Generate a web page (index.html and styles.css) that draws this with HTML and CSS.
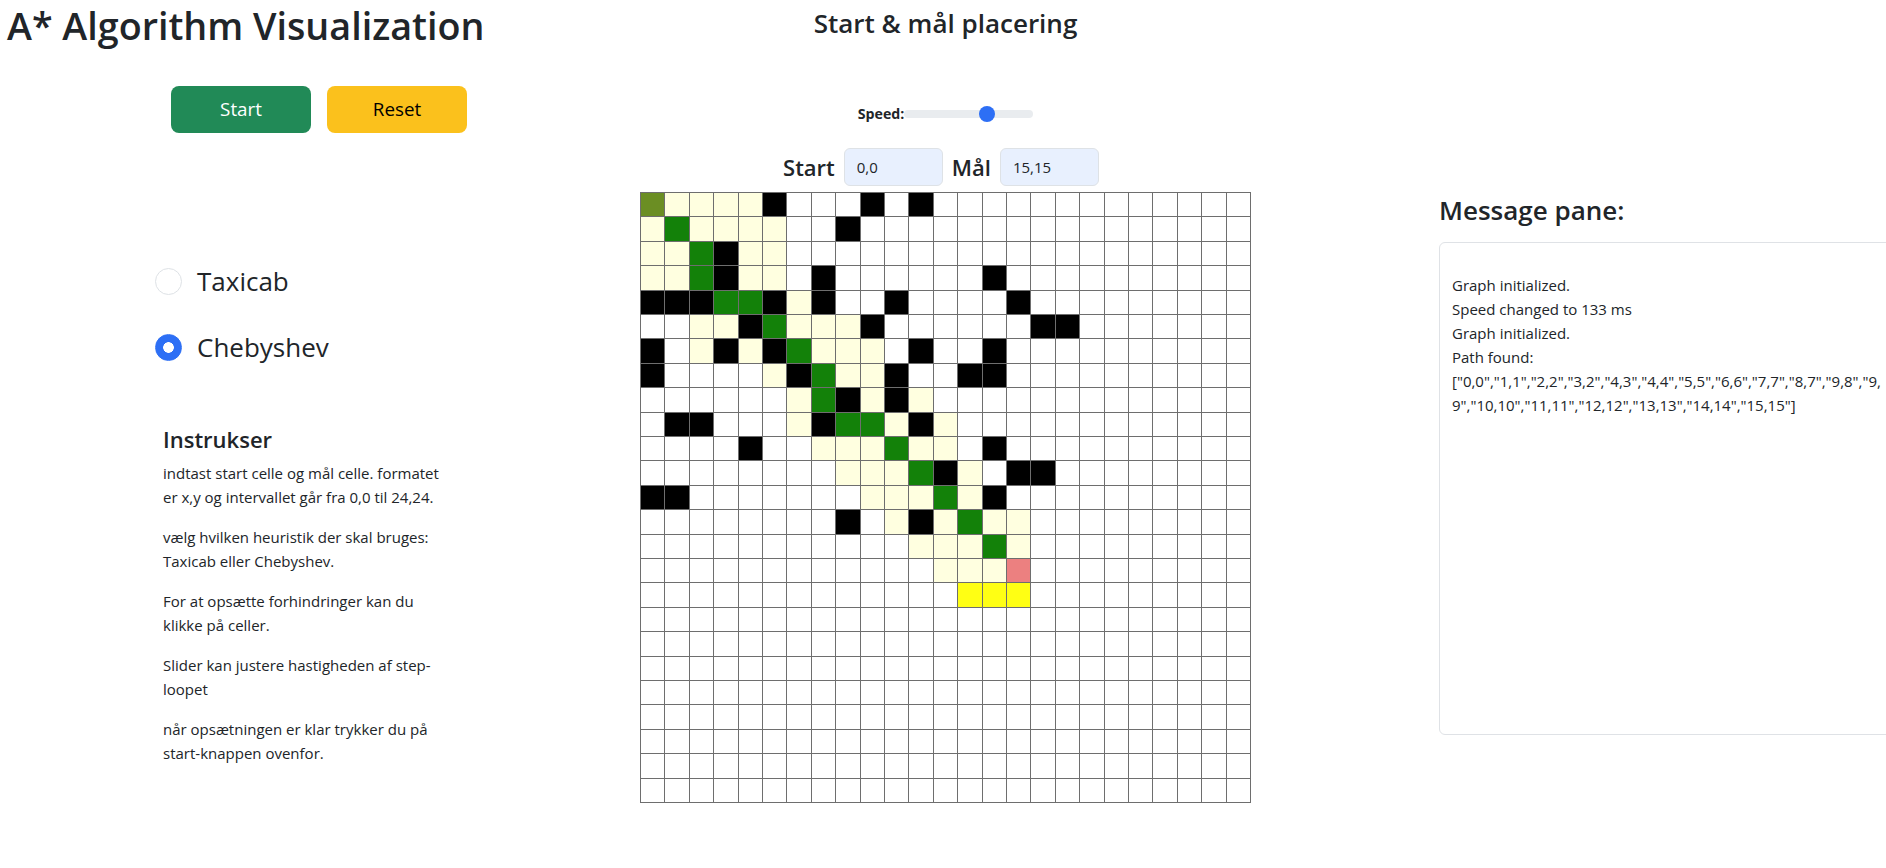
FILE: index.html
```html
<!DOCTYPE html>
<html lang="da">
<head>
<meta charset="utf-8">
<title>A* Algorithm Visualization</title>
<link rel="stylesheet" href="styles.css">
</head>
<body>
<div class="page">
  <div class="left">
    <h1 class="title">A* Algorithm Visualization</h1>
    <div class="actions">
      <button class="btn btn-start">Start</button>
      <button class="btn btn-reset">Reset</button>
    </div>
    <div class="heuristics">
      <label class="radio-row"><input type="radio" name="heuristic" class="radio"><span>Taxicab</span></label>
      <label class="radio-row"><input type="radio" name="heuristic" class="radio" checked><span>Chebyshev</span></label>
    </div>
    <div class="instructions">
      <h4>Instrukser</h4>
      <p>indtast start celle og mål celle. formatet er x,y og intervallet går fra 0,0 til 24,24.</p>
      <p>vælg hvilken heuristik der skal bruges: Taxicab eller Chebyshev.</p>
      <p>For at opsætte forhindringer kan du klikke på celler.</p>
      <p>Slider kan justere hastigheden af step-loopet</p>
      <p>når opsætningen er klar trykker du på start-knappen ovenfor.</p>
    </div>
  </div>

  <div class="center">
    <h3 class="center-title">Start &amp; mål placering</h3>
    <div class="speed-row">
      <label class="speed-label" for="speed">Speed:</label>
      <input id="speed" class="speed" type="range" min="0" max="100" value="66">
    </div>
    <div class="pos-row">
      <span class="pos-label">Start</span>
      <input class="pos-input" type="text" value="0,0">
      <span class="pos-label">Mål</span>
      <input class="pos-input" type="text" value="15,15">
    </div>
    <div class="grid">
      <span class="s"></span><span class="v"></span><span class="v"></span><span class="v"></span><span class="v"></span><span class="w"></span><span></span><span></span><span></span><span class="w"></span><span></span><span class="w"></span><span></span><span></span><span></span><span></span><span></span><span></span><span></span><span></span><span></span><span></span><span></span><span></span><span></span>
      <span class="v"></span><span class="p"></span><span class="v"></span><span class="v"></span><span class="v"></span><span class="v"></span><span></span><span></span><span class="w"></span><span></span><span></span><span></span><span></span><span></span><span></span><span></span><span></span><span></span><span></span><span></span><span></span><span></span><span></span><span></span><span></span>
      <span class="v"></span><span class="v"></span><span class="p"></span><span class="w"></span><span class="v"></span><span class="v"></span><span></span><span></span><span></span><span></span><span></span><span></span><span></span><span></span><span></span><span></span><span></span><span></span><span></span><span></span><span></span><span></span><span></span><span></span><span></span>
      <span class="v"></span><span class="v"></span><span class="p"></span><span class="w"></span><span class="v"></span><span class="v"></span><span></span><span class="w"></span><span></span><span></span><span></span><span></span><span></span><span></span><span class="w"></span><span></span><span></span><span></span><span></span><span></span><span></span><span></span><span></span><span></span><span></span>
      <span class="w"></span><span class="w"></span><span class="w"></span><span class="p"></span><span class="p"></span><span class="w"></span><span class="v"></span><span class="w"></span><span></span><span></span><span class="w"></span><span></span><span></span><span></span><span></span><span class="w"></span><span></span><span></span><span></span><span></span><span></span><span></span><span></span><span></span><span></span>
      <span></span><span></span><span class="v"></span><span class="v"></span><span class="w"></span><span class="p"></span><span class="v"></span><span class="v"></span><span class="v"></span><span class="w"></span><span></span><span></span><span></span><span></span><span></span><span></span><span class="w"></span><span class="w"></span><span></span><span></span><span></span><span></span><span></span><span></span><span></span>
      <span class="w"></span><span></span><span class="v"></span><span class="w"></span><span class="v"></span><span class="w"></span><span class="p"></span><span class="v"></span><span class="v"></span><span class="v"></span><span></span><span class="w"></span><span></span><span></span><span class="w"></span><span></span><span></span><span></span><span></span><span></span><span></span><span></span><span></span><span></span><span></span>
      <span class="w"></span><span></span><span></span><span></span><span></span><span class="v"></span><span class="w"></span><span class="p"></span><span class="v"></span><span class="v"></span><span class="w"></span><span></span><span></span><span class="w"></span><span class="w"></span><span></span><span></span><span></span><span></span><span></span><span></span><span></span><span></span><span></span><span></span>
      <span></span><span></span><span></span><span></span><span></span><span></span><span class="v"></span><span class="p"></span><span class="w"></span><span class="v"></span><span class="w"></span><span class="v"></span><span></span><span></span><span></span><span></span><span></span><span></span><span></span><span></span><span></span><span></span><span></span><span></span><span></span>
      <span></span><span class="w"></span><span class="w"></span><span></span><span></span><span></span><span class="v"></span><span class="w"></span><span class="p"></span><span class="p"></span><span class="v"></span><span class="w"></span><span class="v"></span><span></span><span></span><span></span><span></span><span></span><span></span><span></span><span></span><span></span><span></span><span></span><span></span>
      <span></span><span></span><span></span><span></span><span class="w"></span><span></span><span></span><span class="v"></span><span class="v"></span><span class="v"></span><span class="p"></span><span class="v"></span><span class="v"></span><span></span><span class="w"></span><span></span><span></span><span></span><span></span><span></span><span></span><span></span><span></span><span></span><span></span>
      <span></span><span></span><span></span><span></span><span></span><span></span><span></span><span></span><span class="v"></span><span class="v"></span><span class="v"></span><span class="p"></span><span class="w"></span><span class="v"></span><span></span><span class="w"></span><span class="w"></span><span></span><span></span><span></span><span></span><span></span><span></span><span></span><span></span>
      <span class="w"></span><span class="w"></span><span></span><span></span><span></span><span></span><span></span><span></span><span></span><span class="v"></span><span class="v"></span><span class="v"></span><span class="p"></span><span class="v"></span><span class="w"></span><span></span><span></span><span></span><span></span><span></span><span></span><span></span><span></span><span></span><span></span>
      <span></span><span></span><span></span><span></span><span></span><span></span><span></span><span></span><span class="w"></span><span></span><span class="v"></span><span class="w"></span><span class="v"></span><span class="p"></span><span class="v"></span><span class="v"></span><span></span><span></span><span></span><span></span><span></span><span></span><span></span><span></span><span></span>
      <span></span><span></span><span></span><span></span><span></span><span></span><span></span><span></span><span></span><span></span><span></span><span class="v"></span><span class="v"></span><span class="v"></span><span class="p"></span><span class="v"></span><span></span><span></span><span></span><span></span><span></span><span></span><span></span><span></span><span></span>
      <span></span><span></span><span></span><span></span><span></span><span></span><span></span><span></span><span></span><span></span><span></span><span></span><span class="v"></span><span class="v"></span><span class="v"></span><span class="g"></span><span></span><span></span><span></span><span></span><span></span><span></span><span></span><span></span><span></span>
      <span></span><span></span><span></span><span></span><span></span><span></span><span></span><span></span><span></span><span></span><span></span><span></span><span></span><span class="o"></span><span class="o"></span><span class="o"></span><span></span><span></span><span></span><span></span><span></span><span></span><span></span><span></span><span></span>
      <span></span><span></span><span></span><span></span><span></span><span></span><span></span><span></span><span></span><span></span><span></span><span></span><span></span><span></span><span></span><span></span><span></span><span></span><span></span><span></span><span></span><span></span><span></span><span></span><span></span>
      <span></span><span></span><span></span><span></span><span></span><span></span><span></span><span></span><span></span><span></span><span></span><span></span><span></span><span></span><span></span><span></span><span></span><span></span><span></span><span></span><span></span><span></span><span></span><span></span><span></span>
      <span></span><span></span><span></span><span></span><span></span><span></span><span></span><span></span><span></span><span></span><span></span><span></span><span></span><span></span><span></span><span></span><span></span><span></span><span></span><span></span><span></span><span></span><span></span><span></span><span></span>
      <span></span><span></span><span></span><span></span><span></span><span></span><span></span><span></span><span></span><span></span><span></span><span></span><span></span><span></span><span></span><span></span><span></span><span></span><span></span><span></span><span></span><span></span><span></span><span></span><span></span>
      <span></span><span></span><span></span><span></span><span></span><span></span><span></span><span></span><span></span><span></span><span></span><span></span><span></span><span></span><span></span><span></span><span></span><span></span><span></span><span></span><span></span><span></span><span></span><span></span><span></span>
      <span></span><span></span><span></span><span></span><span></span><span></span><span></span><span></span><span></span><span></span><span></span><span></span><span></span><span></span><span></span><span></span><span></span><span></span><span></span><span></span><span></span><span></span><span></span><span></span><span></span>
      <span></span><span></span><span></span><span></span><span></span><span></span><span></span><span></span><span></span><span></span><span></span><span></span><span></span><span></span><span></span><span></span><span></span><span></span><span></span><span></span><span></span><span></span><span></span><span></span><span></span>
      <span></span><span></span><span></span><span></span><span></span><span></span><span></span><span></span><span></span><span></span><span></span><span></span><span></span><span></span><span></span><span></span><span></span><span></span><span></span><span></span><span></span><span></span><span></span><span></span><span></span>
    </div>
  </div>

  <div class="right">
    <h3 class="pane-title">Message pane:</h3>
    <div class="pane">
      <div class="msg">Graph initialized.</div>
      <div class="msg">Speed changed to 133 ms</div>
      <div class="msg">Graph initialized.</div>
      <div class="msg">Path found:</div>
      <div class="msg">["0,0","1,1","2,2","3,2","4,3","4,4","5,5","6,6","7,7","8,7","9,8","9,</div>
      <div class="msg">9","10,10","11,11","12,12","13,13","14,14","15,15"]</div>
    </div>
  </div>
</div>
</body>
</html>
```

FILE: styles.css
```css
* { box-sizing: border-box; }

html, body {
  margin: 0;
  padding: 0;
  background: #fff;
}

body {
  font-family: "Open Sans", "Noto Sans", sans-serif;
  color: #212529;
  font-size: 15px;
  line-height: 24px;
}

.page {
  display: flex;
  width: 1886px;
  height: 868px;
  overflow: hidden;
}

/* ---------- left column ---------- */
.left {
  flex: none;
  width: 471px;
}

.title {
  margin: 0;
  padding-left: 7px;
  font-size: 37.7px;
  font-weight: 600;
  line-height: 52px;
  white-space: nowrap;
}

.actions {
  display: flex;
  gap: 16px;
  margin: 34px 0 0 171px;
}

.btn {
  width: 140px;
  height: 47px;
  border: 0;
  border-radius: 8px;
  font-family: inherit;
  font-size: 18.8px;
  line-height: 1;
  padding: 0;
}

.btn-start { background: #218a57; color: #fff; }
.btn-reset { background: #fbc11c; color: #000; }

.heuristics {
  display: flex;
  flex-direction: column;
  gap: 26px;
  margin: 128px 0 0 155px;
}

.radio-row {
  display: flex;
  align-items: center;
  gap: 15px;
  height: 40px;
  font-size: 26px;
  line-height: 40px;
}

.radio {
  -webkit-appearance: none;
  appearance: none;
  flex: none;
  margin: 0;
  width: 27px;
  height: 27px;
  border: 1px solid #dee2e6;
  border-radius: 50%;
  background: #fff;
}

.radio:checked {
  border-color: #2d6ff5;
  background: radial-gradient(circle at center, #fff 0 5px, #2d6ff5 5.6px);
}

.instructions {
  width: 290px;
  margin: 59px 0 0 163px;
}

.instructions h4 {
  margin: 0 0 8px;
  font-size: 22px;
  font-weight: 600;
  line-height: 27px;
}

.instructions p {
  margin: 0 0 16px;
}

/* ---------- center column ---------- */
.center {
  flex: none;
  width: 949px;
  display: flex;
  flex-direction: column;
  align-items: center;
}

.center-title {
  margin: 7px 0 0;
  font-size: 26px;
  font-weight: 600;
  line-height: 32px;
}

.speed-row {
  display: flex;
  align-items: center;
  height: 20px;
  margin-top: 65px;
}

.speed-label {
  font-size: 14.2px;
  font-weight: 700;
  line-height: 20px;
}

.speed {
  -webkit-appearance: none;
  appearance: none;
  width: 129px;
  height: 16px;
  margin: 0;
  background: transparent;
}

.speed::-webkit-slider-runnable-track {
  height: 8px;
  border-radius: 4px;
  background: #e9ecef;
}

.speed::-webkit-slider-thumb {
  -webkit-appearance: none;
  appearance: none;
  width: 16px;
  height: 16px;
  margin-top: -4px;
  border: 0;
  border-radius: 50%;
  background: #2d6ff5;
}

.pos-row {
  display: flex;
  align-items: center;
  gap: 9px;
  margin-top: 24px;
  padding-right: 9px;
}

.pos-label {
  font-size: 22px;
  font-weight: 600;
  line-height: 27px;
}

.pos-input {
  width: 99px;
  height: 38px;
  padding: 6px 12px;
  border: 1px solid #dee2e6;
  border-radius: 6px;
  background: #e8f0fe;
  font-family: inherit;
  font-size: 15px;
  color: #212529;
}

.grid {
  margin-top: 6px;
  width: 611px;
  height: 611px;
  display: grid;
  grid-template-columns: repeat(25, 1fr);
  grid-template-rows: repeat(25, 1fr);
  gap: 1px;
  padding: 1px;
  background: #6e6e6e;
}

.grid span { background: #fff; }
.grid .s { background: #6b8e23; }
.grid .p { background: #138109; }
.grid .v { background: #ffffe0; }
.grid .w { background: #000; }
.grid .g { background: #ec8080; }
.grid .o { background: #ffff14; }

/* ---------- right column ---------- */
.right {
  flex: none;
  width: 466px;
  padding-left: 19px;
}

.pane-title {
  margin: 194px 0 16px;
  font-size: 26px;
  font-weight: 600;
  line-height: 32px;
}

.pane {
  width: 480px;
  height: 493px;
  padding: 30px 12px;
  border: 1px solid #dfe2e6;
  border-radius: 6px;
}

.msg {
  white-space: nowrap;
}
```
